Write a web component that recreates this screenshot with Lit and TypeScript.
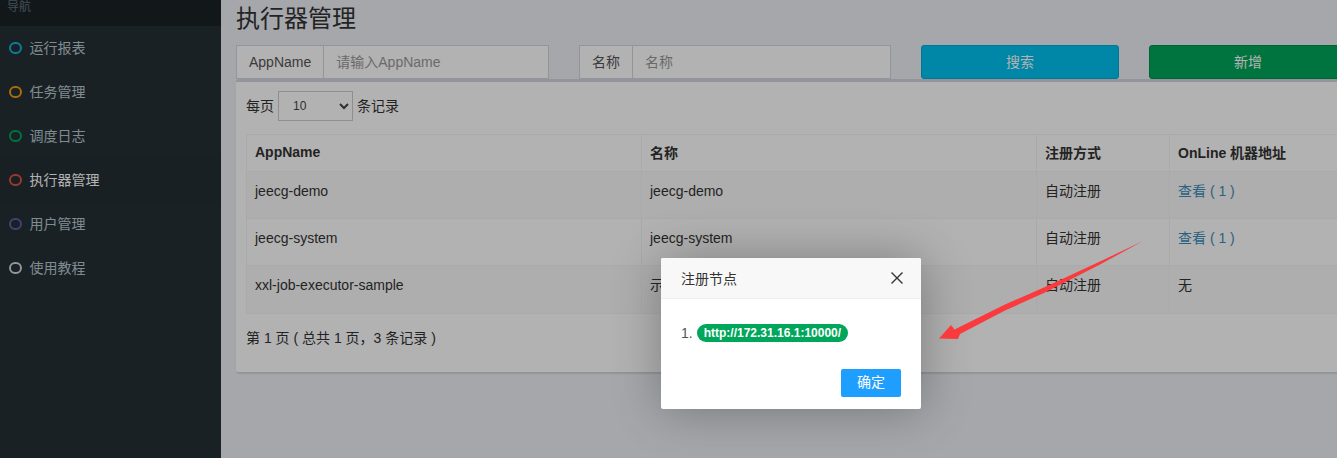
import { LitElement, html, css, svg } from "lit";
import { customElement } from "lit/decorators.js";

const NAV = [
  ["运行报表", "#10b4e0", false],
  ["任务管理", "#f39c12", false],
  ["调度日志", "#00a65a", false],
  ["执行器管理", "#e0503f", true],
  ["用户管理", "#605ca8", false],
  ["使用教程", "#d2d6de", false],
] as const;

const ROWS = [
  ["jeecg-demo", "jeecg-demo", "自动注册", "查看 ( 1 )", true],
  ["jeecg-system", "jeecg-system", "自动注册", "查看 ( 1 )", true],
  ["xxl-job-executor-sample", "示例执行器", "自动注册", "无", false],
] as const;

@customElement("app-root")
export class AppRoot extends LitElement {
  static styles = css`
    :host {
      display: block;
      position: relative;
      width: 1337px;
      height: 458px;
      overflow: hidden;
      font-family: "Liberation Sans", "Noto Sans CJK SC", sans-serif;
      font-size: 14px;
      color: #333;
      background: #ecf0f5;
    }
    .layout { display: flex; height: 458px; }
    .side { width: 221px; flex: none; background: #253036; }
    .side-head { height: 26px; background: #1a2226; color: #5f747e; font-size: 12px; line-height: 14px; padding-left: 7px; box-sizing: border-box; }
    .nav { height: 44px; display: flex; align-items: center; gap: 8px; padding-left: 9px; color: #b8c7ce; }
    .nav span { margin-top: -2px; }
    .nav.on { background: #242e34; color: #fff; }
    .ring { width: 12.5px; height: 12.5px; box-sizing: border-box; border-radius: 50%; border: 2.8px solid; }
    .main { flex: 1; min-width: 0; overflow: hidden; padding: 0 0 0 15px; }
    .title { font-size: 24px; line-height: 36px; height: 45px; box-sizing: border-box; padding-top: 1px; white-space: nowrap; }
    .form { display: flex; height: 34px; width: 1200px; }
    .group { display: flex; height: 34px; box-sizing: border-box; }
    .g1 { width: 313px; }
    .g2 { width: 312px; margin-left: 30px; }
    .addon { border: 1px solid #d2d6de; padding: 0 12px; line-height: 32px; color: #555; background: #fff; white-space: nowrap; }
    .input { flex: 1; border: 1px solid #d2d6de; border-left: 0; padding: 0 12px; line-height: 32px; color: #999; background: #fff; white-space: nowrap; }
    .btn { height: 34px; border-radius: 3px; color: #fff; text-align: center; box-sizing: border-box; line-height: 32px; }
    .b1 { width: 198px; margin-left: 30px; background: #00c0ef; border: 1px solid #00acd6; }
    .b2 { width: 198px; margin-left: 30px; background: #00a65a; border: 1px solid #008d4c; }
    .box { width: 1200px; height: 294px; box-sizing: border-box; background: #fff; border-top: 3px solid #d2d6de; border-bottom: 1px solid #d2d6de; border-radius: 3px; padding: 10px; box-shadow: 0 1px 1px rgba(0,0,0,.1); }
    .len { display: flex; align-items: center; gap: 4px; height: 30px; margin-top: -1px; }
    .len span { margin-top: -2px; }
    .sel { width: 75px; height: 30px; box-sizing: border-box; border: 1px solid #ccc; padding: 0 5px 0 10px; font: 12px "Liberation Sans", sans-serif; color: #444; background: transparent; }
    table { border-collapse: collapse; table-layout: fixed; width: 1180px; margin-top: 13px; }
    th, td { text-align: left; padding: 0 8px; border: 1px solid #f4f4f4; white-space: nowrap; overflow: hidden; }
    th { height: 37px; font-weight: bold; padding-bottom: 2px; box-sizing: border-box; }
    td { height: 47px; padding-bottom: 10px; box-sizing: border-box; }
    td.lat { padding-bottom: 8px; }
    tbody tr:nth-child(odd) { background: #f9f9f9; }
    tbody tr:last-child td { height: 48px; padding-bottom: 12px; }
    tbody tr:last-child td.lat { padding-bottom: 10px; }
    a { color: #3c8dbc; text-decoration: none; }
    .info { margin-top: 14px; line-height: 20px; }
    .shade { position: absolute; inset: 0; background: rgba(0,0,0,.3); }
    .modal { position: absolute; left: 661px; top: 258px; width: 260px; height: 151px; background: #fff; border-radius: 2px; box-shadow: 1px 1px 50px rgba(0,0,0,.3); display: flex; flex-direction: column; }
    .m-head { height: 41px; flex: none; box-sizing: border-box; background: #f8f8f8; border-bottom: 1px solid #eee; border-radius: 2px 2px 0 0; display: flex; align-items: center; justify-content: space-between; padding: 0 18px 0 20px; color: #333; }
    .m-head span { margin-top: -1px; }
    .m-head svg { display: block; }
    .m-body { box-sizing: border-box; padding: 25px 20px 0; height: 70px; display: flex; align-items: flex-start; gap: 4px; color: #555; }
    .m-body span { line-height: 18px; }
    .m-body .pill { background: #00a65a; color: #fff; font-weight: bold; font-size: 12px; border-radius: 9px; padding: 0 7px; height: 18px; white-space: nowrap; }
    .m-foot { display: flex; justify-content: flex-end; padding: 0 20px; }
    .ok { width: 60px; height: 28px; line-height: 27px; border-radius: 2px; background: #1e9fff; color: #fff; text-align: center; font-size: 14px; }
    .arrow { position: absolute; left: 0; top: 0; pointer-events: none; }
  `;

  render() {
    return html`
      <div class="layout">
        <aside class="side">
          <div class="side-head">导航</div>
          ${NAV.map(([t, c, on]) => html`
            <div class="nav ${on ? "on" : ""}"><i class="ring" style="color:${c}"></i><span>${t}</span></div>`)}
        </aside>
        <main class="main">
          <div class="title">执行器管理</div>
          <div class="form">
            <div class="group g1"><div class="addon">AppName</div><div class="input">请输入AppName</div></div>
            <div class="group g2"><div class="addon">名称</div><div class="input">名称</div></div>
            <div class="btn b1">搜索</div>
            <div class="btn b2">新增</div>
          </div>
          <section class="box">
            <div class="len"><span>每页</span>
              <select class="sel"><option>10</option></select>
              <span>条记录</span></div>
            <table>
              <colgroup><col style="width:395px"><col style="width:395px"><col style="width:133px"><col></colgroup>
              <thead><tr><th>AppName</th><th>名称</th><th>注册方式</th><th>OnLine 机器地址</th></tr></thead>
              <tbody>
                ${ROWS.map(([a, b, c, d, link]) => html`<tr><td class="lat">${a}</td><td class="${link ? "lat" : ""}">${b}</td><td>${c}</td><td>${link ? html`<a>${d}</a>` : d}</td></tr>`)}
              </tbody>
            </table>
            <div class="info">第 1 页 ( 总共 1 页，3 条记录 )</div>
          </section>
        </main>
      </div>
      <div class="shade"></div>
      <div class="modal">
        <div class="m-head"><span>注册节点</span>
          <svg width="12" height="12" viewBox="0 0 12 12"><path d="M.5.5l11 11M11.5.5l-11 11" stroke="#333" stroke-width="1.4" fill="none"/></svg>
        </div>
        <div class="m-body"><span>1.</span><span class="pill">http://172.31.16.1:10000/</span></div>
        <div class="m-foot"><div class="ok">确定</div></div>
      </div>
      <svg class="arrow" width="1337" height="458" viewBox="0 0 1337 458">
        ${svg`<polygon points="1143,241 1100,264.5 1045,292.5 1005,310.5 960,334 958,339 939,338.5 951,325 954.5,329.5 1005,304.5 1045,287 1100,261.5" fill="#fb3a3e"/>`}
      </svg>
    `;
  }
}
